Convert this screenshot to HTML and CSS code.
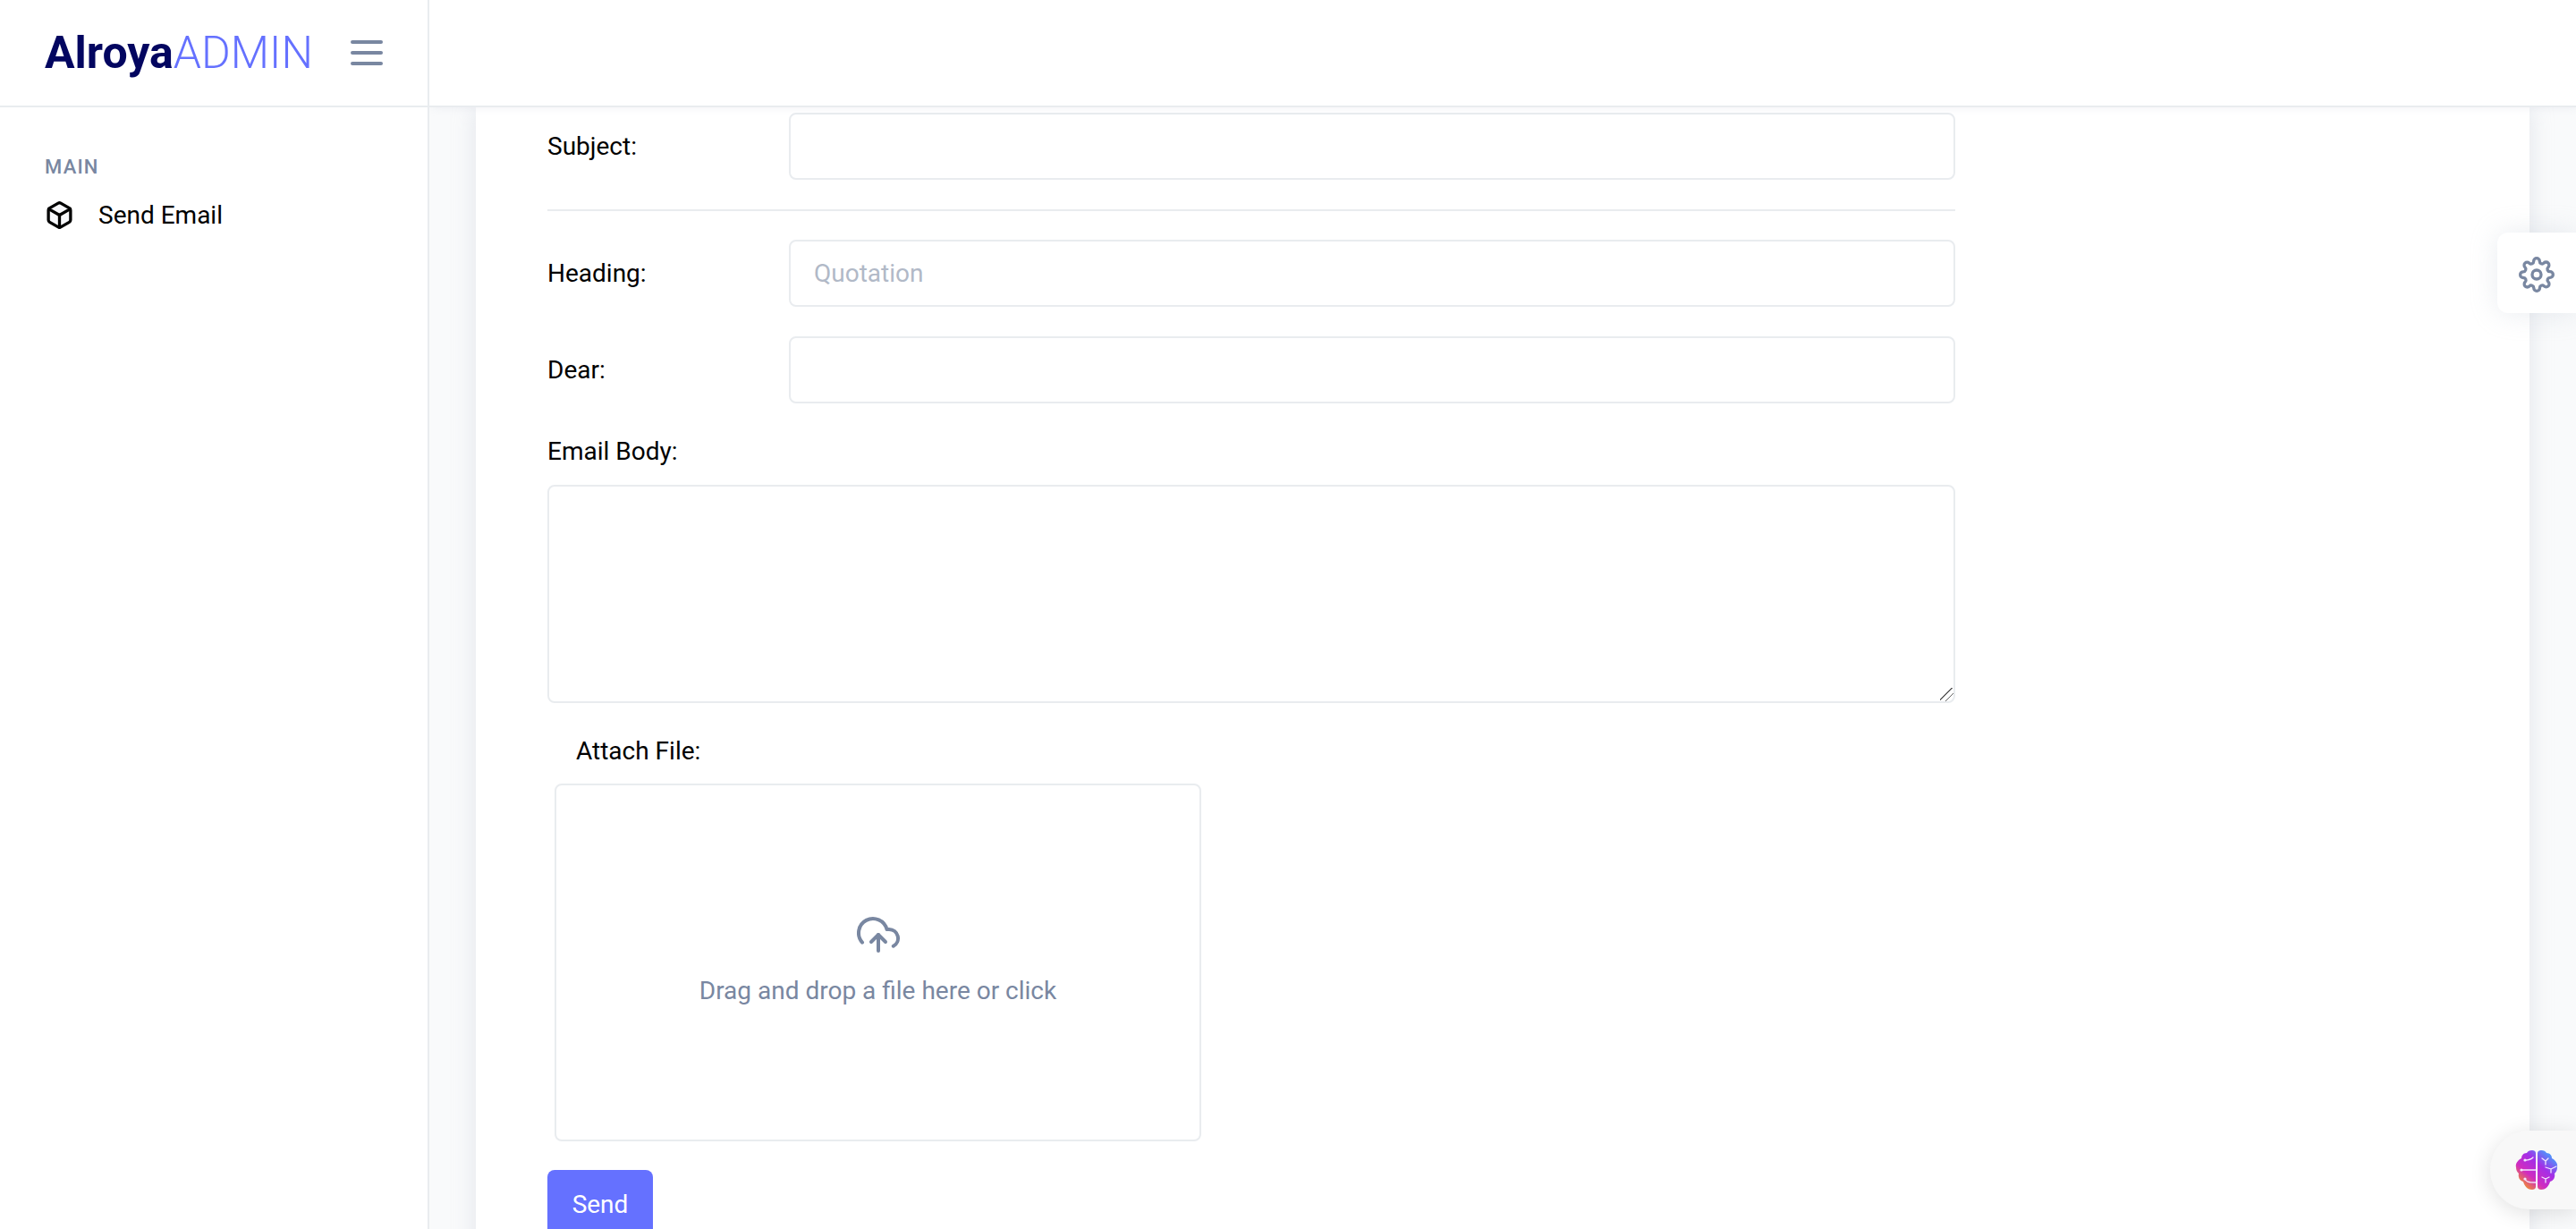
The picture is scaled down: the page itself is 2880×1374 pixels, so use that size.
FILE: index.html
```html
<!DOCTYPE html>
<html>
<head>
  <title>Send Email</title>
  <link rel="stylesheet" href="styles.css">
</head>
<body>
  <nav class="sidebar">
    <div class="brand">
      <a class="logo" href="#">Alroya<span>ADMIN</span></a>
      <div class="toggler"><span></span><span></span><span></span></div>
    </div>
    <div class="nav-body">
      <p class="nav-title">MAIN</p>
      <a class="nav-link" href="#">
        <svg class="nav-icon" viewBox="0 0 24 24">
          <path d="M21 16V8a2 2 0 0 0-1-1.73l-7-4a2 2 0 0 0-2 0l-7 4A2 2 0 0 0 3 8v8a2 2 0 0 0 1 1.73l7 4a2 2 0 0 0 2 0l7-4A2 2 0 0 0 21 16z"></path>
          <polyline points="3.27 6.96 12 12.01 20.73 6.96"></polyline>
          <line x1="12" y1="22.08" x2="12" y2="12"></line>
        </svg>
        Send Email
      </a>
    </div>
  </nav>

  <div class="page">
    <header class="topbar"></header>
    <div class="content">
      <div class="card">
        <form class="mail-form">
          <div class="form-row">
            <label for="subject">Subject:</label>
            <input type="text" id="subject">
          </div>
          <hr>
          <div class="form-row">
            <label for="heading">Heading:</label>
            <input type="text" id="heading" placeholder="Quotation">
          </div>
          <div class="form-row">
            <label for="dear">Dear:</label>
            <input type="text" id="dear">
          </div>
          <label class="body-label" for="emailBody">Email Body:</label>
          <textarea id="emailBody"></textarea>
          <label class="attach-label">Attach File:</label>
          <div class="dropzone">
            <svg class="upload-icon" viewBox="0 0 24 24">
              <polyline points="16 16 12 12 8 16"></polyline>
              <line x1="12" y1="12" x2="12" y2="21"></line>
              <path d="M20.39 18.39A5 5 0 0 0 18 9h-1.26A8 8 0 1 0 3 16.3"></path>
            </svg>
            <p>Drag and drop a file here or click</p>
          </div>
          <button type="button" class="send-btn">Send</button>
        </form>
      </div>
    </div>
  </div>

  <div class="settings-tab">
    <svg class="gear" viewBox="0 0 24 24">
      <circle cx="12" cy="12" r="3"></circle>
      <path d="M19.4 15a1.65 1.65 0 0 0 .33 1.82l.06.06a2 2 0 0 1 0 2.83 2 2 0 0 1-2.83 0l-.06-.06a1.65 1.65 0 0 0-1.82-.33 1.65 1.65 0 0 0-1 1.51V21a2 2 0 0 1-2 2 2 2 0 0 1-2-2v-.09A1.65 1.65 0 0 0 9 19.4a1.65 1.65 0 0 0-1.82.33l-.06.06a2 2 0 0 1-2.83 0 2 2 0 0 1 0-2.83l.06-.06a1.65 1.65 0 0 0 .33-1.82 1.65 1.65 0 0 0-1.51-1H3a2 2 0 0 1-2-2 2 2 0 0 1 2-2h.09A1.65 1.65 0 0 0 4.6 9a1.65 1.65 0 0 0-.33-1.82l-.06-.06a2 2 0 0 1 0-2.83 2 2 0 0 1 2.83 0l.06.06a1.65 1.65 0 0 0 1.82.33H9a1.65 1.65 0 0 0 1-1.51V3a2 2 0 0 1 2-2 2 2 0 0 1 2 2v.09a1.65 1.65 0 0 0 1 1.51 1.65 1.65 0 0 0 1.82-.33l.06-.06a2 2 0 0 1 2.83 0 2 2 0 0 1 0 2.83l-.06.06a1.65 1.65 0 0 0-.33 1.82V9a1.65 1.65 0 0 0 1.51 1H21a2 2 0 0 1 2 2 2 2 0 0 1-2 2h-.09a1.65 1.65 0 0 0-1.51 1z"></path>
    </svg>
  </div>

  <div class="brain-tab">
    <svg class="brain" viewBox="0 0 48 44">
      <defs>
        <linearGradient id="brainFill" x1="1" y1="0" x2="0.1" y2="1">
          <stop offset="0.1" stop-color="#3fa6ff"></stop>
          <stop offset="0.42" stop-color="#a52ee6"></stop>
          <stop offset="0.68" stop-color="#d02cc0"></stop>
          <stop offset="0.95" stop-color="#f59a1c"></stop>
        </linearGradient>
      </defs>
      <path class="lobes" d="M23 3C23 1 21 0 19 0C16 0 14 1 13 3C9 3 7 6 7 9C3 11 0 15 1 19C1 22 2 24 4 26C3 30 5 34 9 35C10 39 13 44 19 44C21 44 23 43 23 41ZM25 3C25 1 27 0 29 0C32 0 34 1 35 3C39 3 41 6 41 9C45 11 48 15 47 19C47 22 46 24 44 26C45 30 43 34 39 35C38 39 35 44 29 44C27 44 25 43 25 41Z"></path>
      <path class="wires" d="M11 11C14 11 17 11 20 8M7 22H23M11 32C12 35 14 36 23 36M30 9L34 12L37 9M34 12L34 16M34 19L40 21L46 18M40 21V25M30 30L34 32L38 30M34 32V36"></path>
      <circle class="dot" cx="11" cy="11" r="1.6"></circle>
      <circle class="dot" cx="7" cy="22" r="1.6"></circle>
      <circle class="dot" cx="11" cy="32" r="1.6"></circle>
    </svg>
  </div>
</body>
</html>
```

FILE: styles.css
```css
* {
  box-sizing: border-box;
}

html, body {
  height: 100%;
}

body {
  margin: 0;
  display: flex;
  overflow: hidden;
  background-color: #f9fafb;
  color: #000;
  font-family: Roboto, "Liberation Sans", sans-serif;
  font-size: 28px;
}

a {
  color: inherit;
  text-decoration: none;
}

/* sidebar */
.sidebar {
  width: 480px;
  flex-shrink: 0;
  background-color: #fff;
  border-right: 2px solid #e9ecef;
  position: relative;
  z-index: 3;
}

.brand {
  height: 120px;
  padding-left: 50px;
  display: flex;
  align-items: center;
  border-bottom: 2px solid #e9ecef;
}

.logo {
  font-size: 50px;
  font-weight: 700;
  color: #030660;
}

.logo span {
  font-weight: 300;
  color: #6571ff;
}

.toggler {
  margin-left: 42px;
  width: 36px;
  display: flex;
  flex-direction: column;
  gap: 8px;
}

.toggler span {
  height: 4px;
  border-radius: 2px;
  background-color: #7987a1;
}

.nav-body {
  padding: 54px 50px 0;
}

.nav-title {
  margin: 0 0 25px;
  font-size: 22px;
  font-weight: 500;
  letter-spacing: 1.2px;
  color: #7987a1;
}

.nav-link {
  display: flex;
  align-items: center;
  gap: 27px;
}

.nav-icon {
  width: 33px;
  height: 33px;
  fill: #f7f8fb;
  stroke: #000;
  stroke-width: 2.4;
  stroke-linecap: round;
  stroke-linejoin: round;
}

/* main area */
.page {
  flex: 1;
  min-width: 0;
  display: flex;
  flex-direction: column;
  height: 100%;
  overflow: hidden;
}

.topbar {
  height: 120px;
  flex-shrink: 0;
  background-color: #fff;
  border-bottom: 2px solid #e9ecef;
  box-shadow: 3px 0 10px 0 rgba(183, 192, 206, 0.2);
  position: relative;
  z-index: 2;
}

.content {
  padding: 0 52px;
}

.card {
  background-color: #fff;
  box-shadow: 0 0 24px 0 rgba(183, 192, 206, 0.35);
  padding: 6px 80px 60px;
}

.mail-form {
  width: 1574px;
}

.form-row {
  display: flex;
  align-items: center;
}

.form-row label {
  width: 270px;
  flex-shrink: 0;
}

input, textarea {
  display: block;
  width: 100%;
  border: 2px solid #e9ecef;
  border-radius: 8px;
  padding: 0 26px;
  background-color: #fff;
  font-family: inherit;
  font-size: 28px;
}

input {
  height: 75px;
}

input::placeholder {
  color: #b1b9c7;
}

textarea {
  height: 244px;
  margin-top: 21px;
}

textarea::-webkit-resizer {
  background: linear-gradient(135deg, transparent 41%, #666 41%, #666 47%, transparent 47%, transparent 67%, #666 67%, #666 73%, transparent 73%);
}

hr {
  margin: 33px 0 32px;
  border: 0;
  border-top: 2px solid #e9ecef;
}

.form-row + .form-row {
  margin-top: 33px;
}

.body-label {
  display: block;
  margin-top: 37px;
}

.attach-label {
  display: block;
  margin: 37px 0 0 32px;
}

.dropzone {
  width: 723px;
  height: 400px;
  margin: 20px 0 0 8px;
  padding-bottom: 7px;
  border: 2px solid #e9ecef;
  border-radius: 8px;
  display: flex;
  flex-direction: column;
  align-items: center;
  justify-content: center;
  color: #7987a1;
}

.dropzone p {
  margin: 22px 0 0;
}

.upload-icon {
  width: 48px;
  height: 48px;
  fill: none;
  stroke: #7987a1;
  stroke-width: 2;
  stroke-linecap: round;
  stroke-linejoin: round;
}

.send-btn {
  display: block;
  margin-top: 32px;
  width: 118px;
  height: 76px;
  border: 0;
  border-radius: 8px;
  background-color: #6571ff;
  color: #fff;
  font-family: inherit;
  font-size: 28px;
}

/* floating tabs on the right edge */
.settings-tab {
  position: fixed;
  top: 260px;
  right: 0;
  width: 88px;
  height: 90px;
  padding: 4px 0 0 24px;
  display: flex;
  align-items: center;
  background-color: #fff;
  border-radius: 12px 0 0 12px;
  box-shadow: 0 0 30px 0 rgba(183, 192, 206, 0.3);
  z-index: 4;
}

.gear {
  width: 40px;
  height: 40px;
  fill: none;
  stroke: #7987a1;
  stroke-width: 2;
  stroke-linecap: round;
  stroke-linejoin: round;
}

.brain-tab {
  position: fixed;
  top: 1264px;
  right: 0;
  width: 96px;
  height: 88px;
  padding-left: 28px;
  display: flex;
  align-items: center;
  background-color: #f8f8f8;
  border-radius: 44px 0 0 44px;
  box-shadow: 0 4px 24px 0 rgba(0, 0, 0, 0.12);
  z-index: 4;
}

.brain {
  width: 48px;
  height: 44px;
}

.lobes {
  fill: url(#brainFill);
}

.wires {
  fill: none;
  stroke: #f3e6ff;
  stroke-width: 1.3;
  stroke-linecap: round;
  stroke-linejoin: round;
}

.dot {
  fill: #f3e6ff;
}
```
